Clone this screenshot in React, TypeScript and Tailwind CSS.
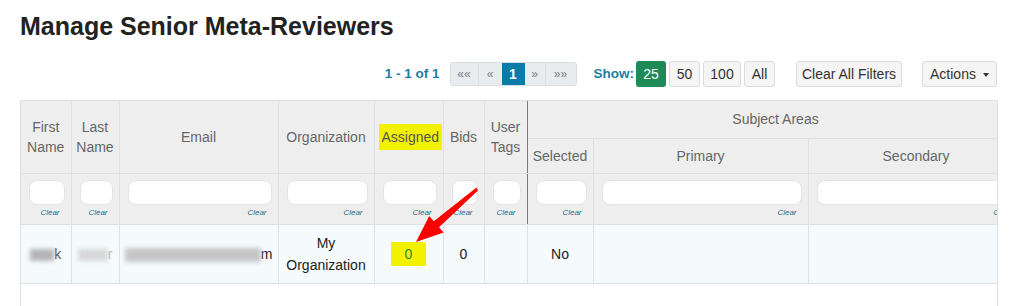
import React from "react";

const cols = [50, 48, 159, 96, 69, 41, 43, 66, 215, 216];

function Clear() {
  return (
    <div className="mt-[4px] pr-[11px] text-right text-[8px] italic leading-none text-[#1b6f8c]">
      Clear
    </div>
  );
}

function FilterCell({ dark }: { dark?: boolean }) {
  return (
    <td
      className={`border-b border-r border-[#dde0e4] bg-[#eeeeee] px-0 pt-[6px] pb-[6px] align-top ${
        dark ? "border-r-[#7a7a7a]" : ""
      }`}
    >
      <div className="ml-[8px] mr-[6px] h-[25px] rounded-[8px] border border-[#e3e3e3] bg-white" />
      <Clear />
    </td>
  );
}

export default function App() {
  const th =
    "border-b border-r border-[#dde0e4] bg-[#eeeeee] px-1 text-center align-middle text-[14px] font-normal leading-[20px] text-[#666]";
  const td =
    "border-b border-r border-[#dde0e4] bg-[#f5fafd] px-1 text-center align-middle text-[14px] leading-[22px] text-[#222]";

  return (
    <div className="relative h-[306px] w-[1011px] overflow-hidden bg-white font-['Liberation_Sans',Arial,sans-serif]">
      {/* Title */}
      <h1 className="ml-[20px] pt-[14px] text-[25px] font-bold leading-none text-[#222]">
        Manage Senior Meta-Reviewers
      </h1>

      {/* Toolbar */}
      <div className="ml-[20px] mt-[22px] flex w-[977px] items-center justify-end text-[14px]">
        <span className="mr-[10px] text-[13.5px] font-bold text-[#1a7ea6]">1 - 1 of 1</span>
        <div className="flex h-[24px] overflow-hidden rounded-[3px] border border-[#dadee2] bg-[#e9ecef] text-[12px] text-[#7a828a]">
          <span className="flex w-[28px] items-center justify-center border-r border-[#dadee2]">
            ««
          </span>
          <span className="flex w-[23px] items-center justify-center">«</span>
          <span className="flex w-[23px] items-center justify-center bg-[#087ca6] text-[14px] font-bold text-white">
            1
          </span>
          <span className="flex w-[21px] items-center justify-center border-r border-[#dadee2]">
            »
          </span>
          <span className="flex w-[30px] items-center justify-center">»»</span>
        </div>
        <span className="ml-[17px] mr-[2px] text-[13.5px] font-bold text-[#1a7ea6]">Show:</span>
        <div className="flex gap-[3px]">
          <span className="flex h-[26px] w-[30px] items-center justify-center rounded-[3px] bg-[#1f8a57] text-white">
            25
          </span>
          <span className="flex h-[26px] w-[31px] items-center justify-center rounded-[3px] border border-[#dcdcdc] bg-[#f5f5f5] text-[#333]">
            50
          </span>
          <span className="flex h-[26px] w-[38px] items-center justify-center rounded-[3px] border border-[#dcdcdc] bg-[#f5f5f5] text-[#333]">
            100
          </span>
          <span className="flex h-[26px] w-[31px] items-center justify-center rounded-[3px] border border-[#dcdcdc] bg-[#f5f5f5] text-[#333]">
            All
          </span>
        </div>
        <span className="ml-[21px] flex h-[26px] w-[106px] items-center justify-center rounded-[3px] border border-[#dcdcdc] bg-[#f5f5f5] text-[#333]">
          Clear All Filters
        </span>
        <span className="ml-[20px] flex h-[26px] w-[75px] items-center justify-center gap-[7px] rounded-[3px] border border-[#dcdcdc] bg-[#f5f5f5] text-[#333]">
          Actions
          <span className="mt-[1px] h-0 w-0 border-x-[3px] border-t-[4px] border-x-transparent border-t-[#333]" />
        </span>
      </div>

      {/* Table */}
      <div className="ml-[20px] mt-[13px] h-[220px] w-[978px] overflow-hidden border-x border-t border-[#dde0e4]">
        <table className="table-fixed border-collapse" style={{ width: cols.reduce((a, b) => a + b, 0) }}>
          <colgroup>
            {cols.map((w, i) => (
              <col key={i} style={{ width: w }} />
            ))}
          </colgroup>
          <thead>
            <tr className="h-[37px]">
              <th rowSpan={2} className={th}>
                First Name
              </th>
              <th rowSpan={2} className={th}>
                Last Name
              </th>
              <th rowSpan={2} className={th}>
                Email
              </th>
              <th rowSpan={2} className={th}>
                Organization
              </th>
              <th rowSpan={2} className={`${th} px-0`}>
                <span className="inline-block bg-[#f2f200] px-[3px] py-[3px] text-[#555]">Assigned</span>
              </th>
              <th rowSpan={2} className={th}>
                Bids
              </th>
              <th rowSpan={2} className={`${th} border-r-[#7a7a7a]`}>
                User Tags
              </th>
              <th colSpan={3} className={th}>
                Subject Areas
              </th>
            </tr>
            <tr className="h-[35px]">
              <th className={th}>Selected</th>
              <th className={th}>Primary</th>
              <th className={th}>Secondary</th>
            </tr>
            <tr className="h-[51px]">
              <FilterCell />
              <FilterCell />
              <FilterCell />
              <FilterCell />
              <FilterCell />
              <FilterCell />
              <FilterCell dark />
              <FilterCell />
              <FilterCell />
              <FilterCell />
            </tr>
          </thead>
          <tbody>
            <tr className="h-[59px]">
              <td className={`${td} whitespace-nowrap`}>
                <span className="inline-block h-[12px] w-[24px] bg-[#b5b5b5] align-middle blur-[2px]" />
                <span className="text-[#555]">k</span>
              </td>
              <td className={`${td} whitespace-nowrap`}>
                <span className="inline-block h-[12px] w-[30px] bg-[#d8d8d8] align-middle blur-[2px]" />
                <span className="text-[#bbb]">r</span>
              </td>
              <td className={`${td} whitespace-nowrap`}>
                <span className="inline-block h-[14px] w-[136px] bg-[#c6c6c6] align-middle blur-[2px]" />
                m
              </td>
              <td className={td}>My Organization</td>
              <td className={td}>
                <span className="inline-block w-[35px] bg-[#f2f200] py-[1px] text-[#2a8a2a]">0</span>
              </td>
              <td className={td}>0</td>
              <td className={td}></td>
              <td className={td}>No</td>
              <td className={td}></td>
              <td className={td}></td>
            </tr>
          </tbody>
        </table>
      </div>

      {/* Red arrow annotation */}
      <svg className="pointer-events-none absolute left-0 top-0" width="1011" height="306">
        <polygon
          points="478,190.5 439,227.3 443.6,232.6 416,242 429.2,216 433.8,221.3 476.5,187.5"
          fill="#ff0000"
        />
      </svg>
    </div>
  );
}
